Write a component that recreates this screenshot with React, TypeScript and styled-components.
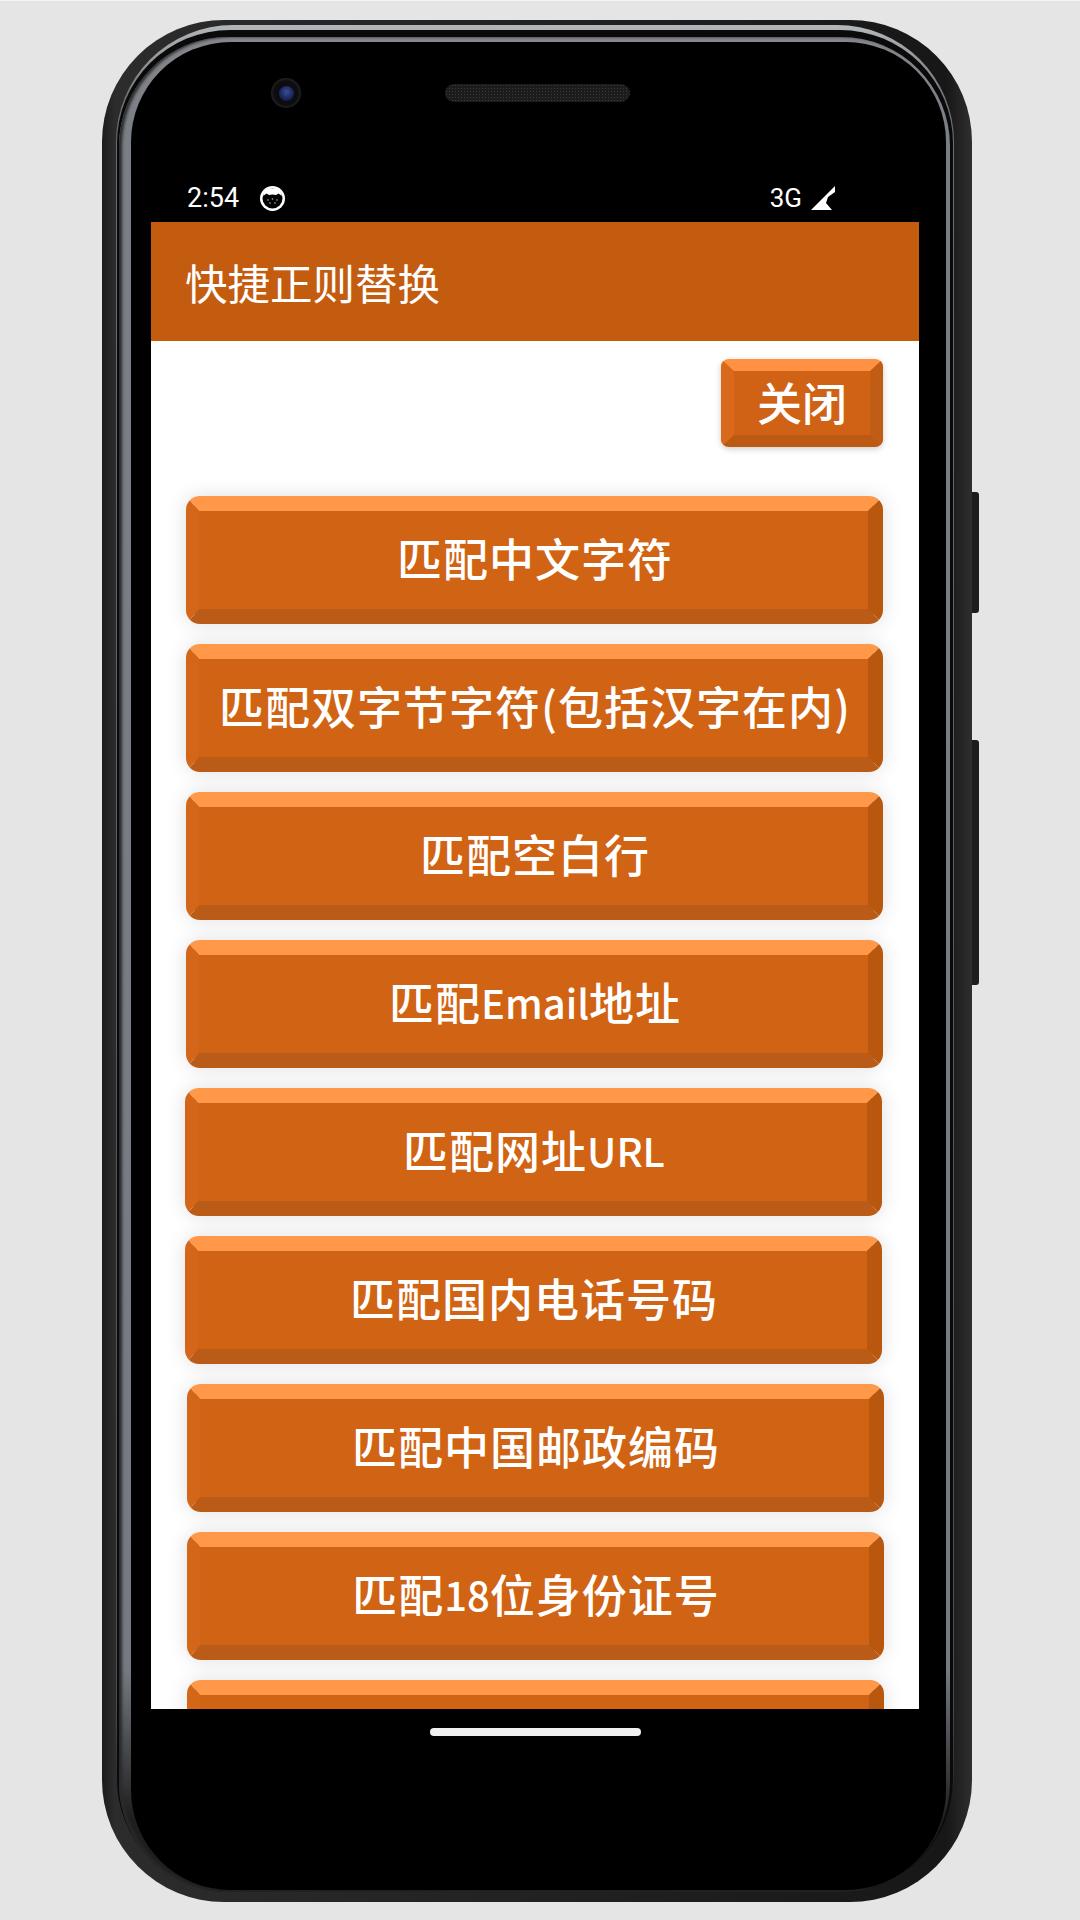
import React from 'react';
import styled, { createGlobalStyle } from 'styled-components';

const GlobalStyle = createGlobalStyle`
  html, body {
    margin: 0;
    padding: 0;
    background: #e5e5e5;
  }
  * {
    box-sizing: border-box;
  }
`;

const Page = styled.div`
  width: 1080px;
  height: 1920px;
  padding: 19px 0 0 102px;
  background: #e5e5e5;
  border-top: 1px solid #f4f4f4;
  overflow: hidden;
  font-family: Roboto, 'Noto Sans CJK SC', sans-serif;
`;

const Shell = styled.div`
  position: relative;
  width: 870px;
  height: 1882px;
  display: flex;
  padding: 5px 18px 10px 14px;
  border-radius: 122px;
  background: linear-gradient(to right, #1b1b1b 0, #2c2c2c 1.5%, #171717 97%, #2e2e2e 100%);
`;

const SideButton = styled.div<{ $top: number; $height: number }>`
  position: absolute;
  right: -7px;
  top: ${(p) => p.$top}px;
  width: 7px;
  height: ${(p) => p.$height}px;
  border-radius: 0 3px 3px 0;
  background: #1d1d1d;
`;

const Highlight = styled.div`
  flex: 1;
  display: flex;
  padding: 5px 1px 0 1px;
  border-radius: 117px;
  background: linear-gradient(to bottom, #b4b7ba 0, #6e7073 4%, #4c4c4e 90%, #1c1c1c 96%);
`;

const Gap = styled.div`
  flex: 1;
  display: flex;
  padding: 7px 3px 0 2px;
  border-radius: 113px;
  background: #0a0a0a;
`;

const Bezel = styled.div`
  flex: 1;
  display: flex;
  padding: 5px 4px 2px 12px;
  border-radius: 109px;
  background: linear-gradient(to bottom, #85878c 0, #7a7f85 5%, #747a80 88%, #1f1f1f 96%);
  box-shadow: inset 3px 0 3px #2a2a2c;
`;

const Face = styled.div`
  flex: 1;
  display: flex;
  flex-direction: column;
  padding: 0 27px 0 20px;
  border-radius: 100px;
  background: #000;
  overflow: hidden;
`;

const TopBezel = styled.div`
  height: 138px;
  display: flex;
  align-items: center;
  gap: 144px;
  padding: 0 0 36px 120px;
  flex-shrink: 0;
`;

const Camera = styled.div`
  width: 30px;
  height: 30px;
  display: flex;
  align-items: center;
  justify-content: center;
  border-radius: 50%;
  background: radial-gradient(circle, #0d0d0f 55%, #2a2b2e 78%, #17181a 100%);
`;

const Lens = styled.div`
  width: 15px;
  height: 15px;
  border-radius: 50%;
  background: radial-gradient(circle at 50% 40%, #3c4f92 0, #1d2a63 50%, #0b1030 100%);
`;

const Speaker = styled.div`
  width: 185px;
  height: 18px;
  border-radius: 9px;
  background-color: #1c1c1c;
  background-image: radial-gradient(#3c3c3c 0.8px, transparent 1px);
  background-size: 3px 3px;
`;

const StatusBar = styled.div`
  height: 42px;
  flex-shrink: 0;
  display: flex;
  align-items: center;
  justify-content: space-between;
  padding: 0 84px 6px 36px;
  color: #fff;
`;

const StatusGroup = styled.div`
  display: flex;
  align-items: center;
`;

const Clock = styled.span`
  font-size: 27px;
  margin-right: 21px;
`;

const NetworkLabel = styled.span`
  font-size: 26px;
  margin-right: 9px;
`;

const Screen = styled.div`
  height: 1487px;
  flex-shrink: 0;
  display: flex;
  flex-direction: column;
  background: #fff;
  overflow: hidden;
`;

const AppBar = styled.div`
  height: 119px;
  flex-shrink: 0;
  display: flex;
  align-items: center;
  padding-left: 34px;
  background: #c45c10;
  color: #fff;
  font-size: 42.5px;
  font-family: 'Noto Sans CJK SC', sans-serif;
  font-weight: 400;
`;

const Content = styled.div`
  display: flex;
  flex-direction: column;
  flex-shrink: 0;
  padding: 18px 0 0 35px;
`;

const CloseRow = styled.div`
  display: flex;
  justify-content: flex-end;
  width: 697px;
  margin-bottom: 49px;
`;

const CloseButton = styled.div`
  width: 162px;
  height: 88px;
  display: flex;
  align-items: center;
  justify-content: center;
  padding-bottom: 4px;
  border-style: solid;
  border-width: 12px 13px 12px 13px;
  border-color: #ff9143 #c05c14 #bc5a14 #d96a1c;
  border-radius: 8px;
  background: #d06216;
  box-shadow: 0 2px 6px rgba(0, 0, 0, 0.2);
  color: #fff;
  font-family: 'Noto Sans CJK SC', sans-serif;
  font-size: 45px;
  font-weight: 500;
  white-space: nowrap;
`;

const ButtonList = styled.div`
  display: flex;
  flex-direction: column;
  gap: 20px;
  flex-shrink: 0;
`;

const MatchButton = styled.div<{ $nudge: number }>`
  width: 697px;
  height: 128px;
  flex-shrink: 0;
  margin-left: ${(p) => p.$nudge}px;
  display: flex;
  align-items: center;
  justify-content: center;
  padding: 0 0 5px 3px;
  border-style: solid;
  border-width: 15px 15px 15px 13px;
  border-color: #ff9848 #b9570f #ba5c18 #d4661a;
  border-radius: 14px;
  background: #d16314;
  box-shadow: 0 0 20px rgba(0, 0, 0, 0.13);
  color: #fff;
  font-family: 'Noto Sans CJK SC', sans-serif;
  font-size: 45px;
  font-weight: 500;
  letter-spacing: 1px;
  white-space: pre;
`;

const LatinRun = styled.span`
  font-size: 40px;
  letter-spacing: 0;
`;

const CatIcon = () => (
  <svg width="25" height="25" viewBox="0 0 25 25">
    <circle cx="12.5" cy="12.5" r="12.5" fill="#fff" />
    <circle cx="12.5" cy="12.5" r="10" fill="#000" />
    <path d="M3 10 C4 4 8 2.5 12.5 2.5 C17 2.5 21 4 22 10 L18.5 7.5 L16 9 C14 8.2 11 8.2 9 9 L6.5 7.5 Z" fill="#fff" />
    <g fill="#777">
      <circle cx="8" cy="14" r="0.9" />
      <circle cx="12.5" cy="13" r="0.9" />
      <circle cx="17" cy="14" r="0.9" />
      <circle cx="10" cy="17" r="0.9" />
      <circle cx="15" cy="17" r="0.9" />
    </g>
  </svg>
);

const SignalIcon = () => (
  <svg width="24" height="24" viewBox="0 0 24 24">
    <path d="M0 24 L24 0 L24 6 L17 11 L15 17 L21 24 Z" fill="#fff" />
  </svg>
);

const NavArea = styled.div`
  flex: 1;
  display: flex;
  justify-content: center;
  padding: 19px 0 0 0;
`;

const HomePill = styled.div`
  width: 211px;
  height: 8px;
  border-radius: 4px;
  background: #f0f0f0;
`;

const matchItems = [
  { label: '匹配中文字符', nudge: 0 },
  { label: '匹配双字节字符(包括汉字在内)', nudge: 0 },
  { label: '匹配空白行', nudge: 0 },
  { label: '匹配Email地址', nudge: 0 },
  { label: '匹配网址URL', nudge: -1 },
  { label: '匹配国内电话号码', nudge: -1 },
  { label: '匹配中国邮政编码', nudge: 1 },
  { label: '匹配18位身份证号', nudge: 1 },
  { label: '', nudge: 1 },
];

// latin letters and digits are narrower than the cjk text around them
const renderLabel = (label: string) =>
  label.split(/([A-Za-z0-9]+)/).map((part, i) =>
    i % 2 === 1 ? <LatinRun key={i}>{part}</LatinRun> : <span key={i}>{part}</span>
  );

const App: React.FC = () => {
  return (
    <Page>
      <GlobalStyle />
      <Shell>
        <SideButton $top={472} $height={121} />
        <SideButton $top={720} $height={245} />
        <Highlight>
          <Gap>
            <Bezel>
              <Face>
                <TopBezel>
                  <Camera>
                    <Lens />
                  </Camera>
                  <Speaker />
                </TopBezel>
                <StatusBar>
                  <StatusGroup>
                    <Clock>2:54</Clock>
                    <CatIcon />
                  </StatusGroup>
                  <StatusGroup>
                    <NetworkLabel>3G</NetworkLabel>
                    <SignalIcon />
                  </StatusGroup>
                </StatusBar>
                <Screen>
                  <AppBar>快捷正则替换</AppBar>
                  <Content>
                    <CloseRow>
                      <CloseButton>关闭</CloseButton>
                    </CloseRow>
                    <ButtonList>
                      {matchItems.map((item, index) => (
                        <MatchButton key={index} $nudge={item.nudge}>
                          {renderLabel(item.label)}
                        </MatchButton>
                      ))}
                    </ButtonList>
                  </Content>
                </Screen>
                <NavArea>
                  <HomePill />
                </NavArea>
              </Face>
            </Bezel>
          </Gap>
        </Highlight>
      </Shell>
    </Page>
  );
};

export default App;
